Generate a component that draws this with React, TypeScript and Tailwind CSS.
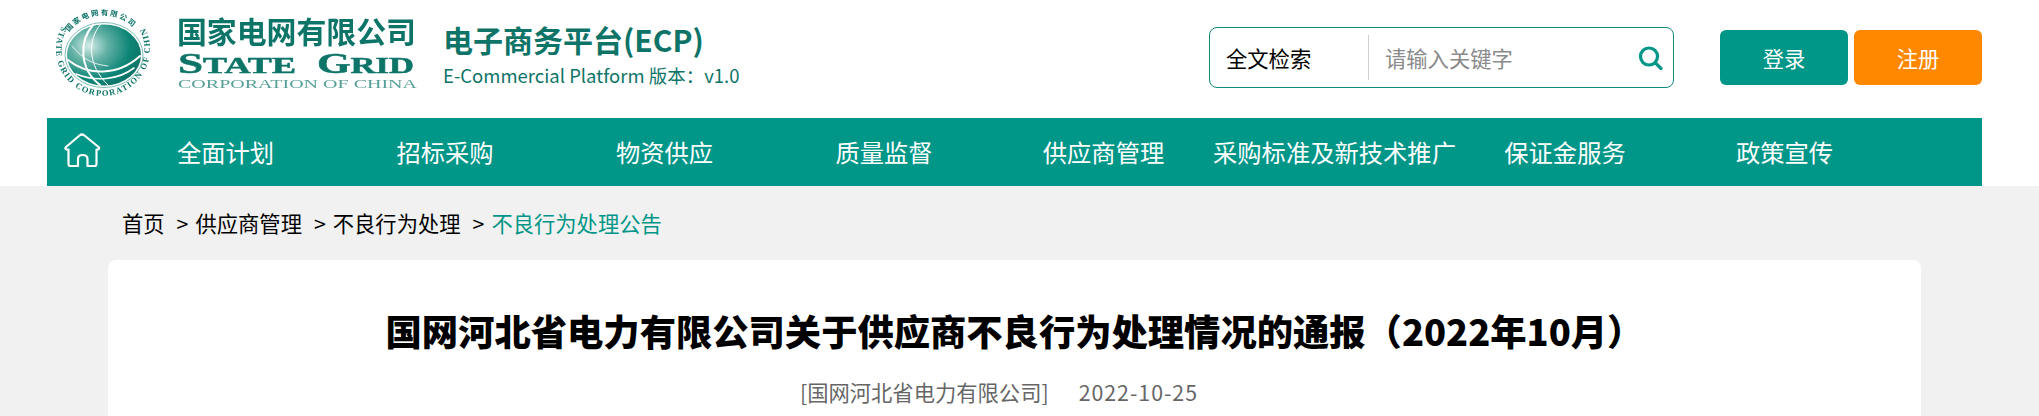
const sans = "font-['Noto_Sans_CJK_SC','Noto_Sans',sans-serif]";

const navItems = [
  { label: "全面计划", w: "w-[219px]" },
  { label: "招标采购", w: "w-[220px]" },
  { label: "物资供应", w: "w-[219px]" },
  { label: "质量监督", w: "w-[220px]" },
  { label: "供应商管理", w: "w-[219px]" },
  { label: "采购标准及新技术推广", w: "w-[242px]" },
  { label: "保证金服务", w: "w-[220px]" },
  { label: "政策宣传", w: "w-[219px]" },
];

function Logo() {
  return (
    <svg width="370" height="118" viewBox="50 0 370 118" className="block shrink-0">
      <defs>
        <radialGradient id="globe" cx="0.3" cy="0.35" r="0.85">
          <stop offset="0" stopColor="#d4ece8" />
          <stop offset="0.3" stopColor="#62b0a4" />
          <stop offset="0.65" stopColor="#0d8577" />
          <stop offset="1" stopColor="#05695e" />
        </radialGradient>
        <filter id="soft" x="-5%" y="-5%" width="110%" height="110%">
          <feGaussianBlur stdDeviation="0.35" />
        </filter>
        <path id="ringTop" d="M 69 32 A 41 38 0 0 1 137 32" />
        <path id="ringBottom" d="M 62 26 A 47 47 0 1 0 144 26" />
      </defs>
      <g filter="url(#soft)">
        <ellipse cx="104" cy="55" rx="37" ry="30.5" fill="url(#globe)" />
        <ellipse cx="104" cy="55" rx="39" ry="32.5" fill="none" stroke="#5faca1" strokeWidth="0.8" />
        <g fill="none" stroke="#fff" strokeLinecap="round">
          <path d="M93 25 C80 40 78 68 100 85" strokeWidth="2" />
          <path d="M100 25 C88 40 87 65 108 85" strokeWidth="1" />
          <path d="M68 60 C88 76 118 76 140 56" strokeWidth="2" />
          <path d="M76 74 C96 82 118 80 134 68" strokeWidth="1.6" />
          <path d="M72 46 C84 60 92 64 108 66" strokeWidth="0.8" />
        </g>
        <text fill="#0e7468" fontSize="7.5" fontWeight="700" fontFamily="'Noto Sans CJK SC',sans-serif">
          <textPath href="#ringTop" textLength="72">国家电网有限公司</textPath>
        </text>
        <text fill="#0e7468" fontSize="8.5" fontWeight="700" fontFamily="'Liberation Serif',serif">
          <textPath href="#ringBottom" textLength="200">STATE GRID CORPORATION OF CHINA</textPath>
        </text>
        <text x="177" y="43" textLength="239" lengthAdjust="spacingAndGlyphs" fill="#0e7468" fontSize="30" fontWeight="700" fontFamily="'Noto Sans CJK SC',sans-serif">
          国家电网有限公司
        </text>
        <text x="178" y="73" textLength="118" lengthAdjust="spacingAndGlyphs" fill="#0e7468" fontWeight="700" fontFamily="'Liberation Serif',serif" fontSize="24" stroke="#0e7468" strokeWidth="0.5">
          <tspan fontSize="30">S</tspan>TATE
        </text>
        <text x="317" y="73" textLength="97" lengthAdjust="spacingAndGlyphs" fill="#0e7468" fontWeight="700" fontFamily="'Liberation Serif',serif" fontSize="24" stroke="#0e7468" strokeWidth="0.5">
          <tspan fontSize="30">G</tspan>RID
        </text>
        <text x="178" y="88" textLength="239" lengthAdjust="spacingAndGlyphs" fill="#58a097" fontFamily="'Liberation Serif',serif" fontSize="13.5">
          CORPORATION OF CHINA
        </text>
      </g>
    </svg>
  );
}

function HomeIcon() {
  return (
    <svg width="38" height="37" viewBox="0 0 38 37" fill="none" stroke="#fff" strokeWidth="2.2" strokeLinejoin="round">
      <path d="M16.5 3.5 Q19 1.5 21.5 3.5 L35.5 15 Q37 17 35 17.5 H33.5 V32 Q33.5 34 31.5 34 H24.5 V27 Q24.5 23 19.5 23 Q15 23 15 27 V34 H7.5 Q5.5 34 5.5 32 V17.5 H3.5 Q1.5 17 3 15 Z" />
    </svg>
  );
}

export default function App() {
  return (
    <div className={`h-[416px] overflow-hidden bg-[#f1f1f1] ${sans}`}>
      <div className="bg-white pl-[47px] pr-[57px]">
        <header className="flex h-[118px]">
          <div className="ml-[3px]">
            <Logo />
          </div>
          <div className="ml-[23px] pt-[18px]">
            <h1 className="text-[30px] leading-[42px] font-bold text-[#0e7468]">电子商务平台(ECP)</h1>
            <p className="mt-[2px] text-[18.5px] leading-[26px] text-[#0e7468]">E-Commercial Platform 版本：v1.0</p>
          </div>
          <div className="ml-auto flex items-start pt-[27px]">
            <div className="flex h-[61px] w-[465px] items-center rounded-lg border border-[#0f8a7d] pl-4 pr-[10px]">
              <span className="w-[142px] text-[21.3px] text-black">全文检索</span>
              <span className="h-[45px] w-px bg-[#cfcfcf]" />
              <span className="ml-4 flex-1 text-[21.3px] text-[#8a8a8a]">请输入关键字</span>
              <svg width="25" height="24" viewBox="0 0 25 24" fill="none" stroke="#009688" strokeWidth="3.2" strokeLinecap="round">
                <ellipse cx="11" cy="10.5" rx="8.5" ry="8.5" />
                <path d="M17.5 17 L23 22.5" />
              </svg>
            </div>
            <button className="mt-[3px] ml-[46px] h-[55px] w-[128px] rounded-md bg-[#009688] text-[21.3px] text-white">登录</button>
            <button className="mt-[3px] ml-[6px] h-[55px] w-[128px] rounded-md bg-[#ff8800] text-[21.3px] text-white">注册</button>
          </div>
        </header>
        <nav className="flex h-[68px] items-center bg-[#009688] text-white">
          <div className="mb-1 flex w-[69px] shrink-0 justify-center">
            <HomeIcon />
          </div>
          {navItems.map((item) => (
            <a key={item.label} className={`${item.w} shrink-0 text-center text-[24.3px] whitespace-nowrap`}>
              {item.label}
            </a>
          ))}
        </nav>
      </div>
      <div className="flex h-[74px] items-center pl-[122px] text-[21.3px] text-black">
        <span>首页</span>
        <span className="ml-[12px] mr-[7px]">&gt;</span>
        <span>供应商管理</span>
        <span className="ml-[12px] mr-[7px]">&gt;</span>
        <span>不良行为处理</span>
        <span className="ml-[12px] mr-[7px]">&gt;</span>
        <span className="text-[#009688]">不良行为处理公告</span>
      </div>
      <main className="ml-[108px] mr-[118px] h-[300px] rounded-lg bg-white pt-[41px] text-center">
        <h2 className="text-[36.3px] leading-[58px] font-black text-black">
          国网河北省电力有限公司关于供应商不良行为处理情况的通报（2022年10月）
        </h2>
        <p className="mt-[17px] pr-[31px] text-[21.3px] text-[#666]">
          [国网河北省电力有限公司]<span className="ml-[30px] tracking-[1px]">2022-10-25</span>
        </p>
      </main>
    </div>
  );
}
